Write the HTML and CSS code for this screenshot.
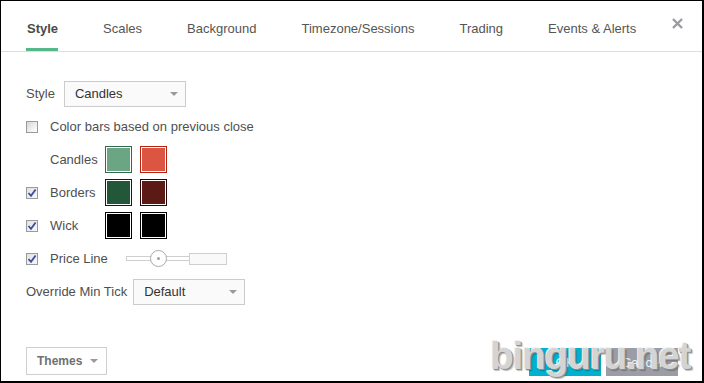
FILE: index.html
```html
<!DOCTYPE html>
<html>
<head>
<meta charset="utf-8">
<link rel="stylesheet" href="styles.css">
</head>
<body>
<div class="dialog">
  <div class="tabs">
    <div class="tab-list">
      <div class="tab active">Style</div>
      <div class="tab">Scales</div>
      <div class="tab">Background</div>
      <div class="tab">Timezone/Sessions</div>
      <div class="tab">Trading</div>
      <div class="tab">Events &amp; Alerts</div>
    </div>
    <div class="close">
      <svg width="11" height="11" viewBox="0 0 11 11"><path d="M1 1 L10 10 M10 1 L1 10" stroke="#9b9ba2" stroke-width="2.4" fill="none"/></svg>
    </div>
  </div>

  <div class="content">
    <div class="row">
      <span class="label">Style</span>
      <div class="select select-style"><span>Candles</span><i class="caret"></i></div>
    </div>
    <div class="row">
      <span class="cb"></span>
      <span class="label">Color bars based on previous close</span>
    </div>
    <div class="row">
      <span class="cb-space"></span>
      <span class="name">Candles</span>
      <span class="swatch sw-up"><span></span></span>
      <span class="swatch sw-down"><span></span></span>
    </div>
    <div class="row">
      <span class="cb checked"><svg width="10" height="10" viewBox="0 0 10 10"><path d="M1.5 5 L4 7.8 L8.6 1.5" stroke="#3a4c9c" stroke-width="1.8" fill="none"/></svg></span>
      <span class="name">Borders</span>
      <span class="swatch sw-bup"><span></span></span>
      <span class="swatch sw-bdown"><span></span></span>
    </div>
    <div class="row">
      <span class="cb checked"><svg width="10" height="10" viewBox="0 0 10 10"><path d="M1.5 5 L4 7.8 L8.6 1.5" stroke="#3a4c9c" stroke-width="1.8" fill="none"/></svg></span>
      <span class="name">Wick</span>
      <span class="swatch sw-wick"><span></span></span>
      <span class="swatch sw-wick"><span></span></span>
    </div>
    <div class="row">
      <span class="cb checked"><svg width="10" height="10" viewBox="0 0 10 10"><path d="M1.5 5 L4 7.8 L8.6 1.5" stroke="#3a4c9c" stroke-width="1.8" fill="none"/></svg></span>
      <span class="label">Price Line</span>
      <div class="slider">
        <span class="track-thin"></span>
        <span class="track-box"></span>
        <span class="knob"><i></i></span>
      </div>
    </div>
    <div class="row">
      <span class="label">Override Min Tick</span>
      <div class="select select-tick"><span>Default</span><i class="caret"></i></div>
    </div>
  </div>

  <div class="footer">
    <div class="themes"><span>Themes</span><i class="caret"></i></div>
    <div class="btn ok">OK</div>
    <div class="btn cancel">Cancel</div>
  </div>

  <div class="watermark">binguru.net</div>
</div>
</body>
</html>
```

FILE: styles.css
```css
html, body {
  margin: 0;
  padding: 0;
  background: #ffffff;
}

.dialog {
  position: relative;
  width: 704px;
  height: 383px;
  box-sizing: border-box;
  border-top: 1px solid #000;
  border-left: 1px solid #000;
  border-right: 2px solid #000;
  border-bottom: 2px solid #000;
  background: #fff;
  display: flex;
  flex-direction: column;
  font-family: "Liberation Sans", Arial, sans-serif;
  font-size: 13px;
  color: #4f4f4f;
  overflow: hidden;
}

/* Tabs */
.tabs {
  display: flex;
  align-items: flex-start;
  height: 50px;
  border-bottom: 1px solid #dedede;
  padding-left: 25px;
}

.tab-list {
  display: flex;
  gap: 45px;
}

.tab {
  padding-top: 19px;
  line-height: 18px;
  height: 28px;
  border-bottom: 3px solid transparent;
  color: #555;
  white-space: nowrap;
}

.tab.active {
  font-weight: bold;
  color: #4a4a4a;
  border-bottom-color: #55b88a;
  padding-left: 1px;
}

.close {
  margin-left: auto;
  margin-right: 19px;
  margin-top: 17px;
  width: 11px;
  height: 11px;
  display: flex;
}

/* Content */
.content {
  padding: 25px 0 0 25px;
  display: flex;
  flex-direction: column;
}

.row {
  display: flex;
  align-items: center;
  height: 33px;
}

.label {
  white-space: nowrap;
}

.name {
  width: 55px;
  white-space: nowrap;
}

.cb, .cb-space {
  width: 12px;
  height: 12px;
  margin-right: 12px;
  flex: none;
}

.cb {
  box-sizing: border-box;
  border: 1px solid #9a9a9a;
  background: linear-gradient(135deg, #d6d6d6 0%, #f4f4f4 70%, #ffffff 100%);
  display: flex;
  align-items: center;
  justify-content: center;
}

.cb.checked {
  background: linear-gradient(135deg, #e2e2e2 0%, #f7f7f7 100%);
}

.cb svg {
  display: block;
}

/* Select */
.select {
  box-sizing: border-box;
  height: 26px;
  border: 1px solid #cccccc;
  background: #fafafa;
  display: flex;
  align-items: center;
  justify-content: space-between;
  padding: 0 7px 0 10px;
  margin-left: 9px;
  color: #333;
}

.select-style {
  width: 122px;
}

.select-tick {
  width: 112px;
  margin-left: 6px;
}

.caret {
  display: block;
  width: 0;
  height: 0;
  border-left: 4px solid transparent;
  border-right: 4px solid transparent;
  border-top: 4px solid #9a9a9a;
}

/* Swatches */
.swatch {
  box-sizing: border-box;
  width: 27px;
  height: 27px;
  padding: 1px;
  background: #fff;
  border: 1px solid #000;
  margin-right: 8px;
  display: flex;
}

.swatch span {
  flex: 1;
}

.sw-up { border-color: #2f6c4d; }
.sw-up span { background: #6ba584; }
.sw-down { border-color: #b42412; }
.sw-down span { background: #dc5442; }
.sw-bup { border-color: #0d2217; }
.sw-bup span { background: #225739; }
.sw-bdown { border-color: #2a0706; }
.sw-bdown span { background: #5b1a15; }
.sw-wick { border-color: #000; }
.sw-wick span { background: #000; }

/* Slider */
.slider {
  position: relative;
  margin-left: 18px;
  width: 101px;
  height: 17px;
  display: flex;
  align-items: center;
}

.track-thin {
  box-sizing: border-box;
  width: 63px;
  height: 5px;
  border: 1px solid #cfcfcf;
  border-right: none;
  background: #fff;
}

.track-box {
  box-sizing: border-box;
  width: 38px;
  height: 12px;
  border: 1px solid #cfcfcf;
  background: #f9f9f9;
}

.knob {
  position: absolute;
  left: 24px;
  top: 0;
  box-sizing: border-box;
  width: 17px;
  height: 17px;
  border: 1px solid #a9a9b0;
  border-radius: 50%;
  background: #fff;
  display: flex;
  align-items: center;
  justify-content: center;
}

.knob i {
  display: block;
  width: 3px;
  height: 3px;
  border-radius: 50%;
  background: #a0a0a0;
}

/* Footer */
.footer {
  margin-top: auto;
  display: flex;
  align-items: flex-end;
  padding: 0 24px 5px 25px;
}

.themes {
  box-sizing: border-box;
  width: 81px;
  height: 28px;
  margin-bottom: 1px;
  border: 1px solid #cfcfcf;
  display: flex;
  align-items: center;
  gap: 8px;
  padding-left: 10px;
  font-size: 12px;
  font-weight: bold;
  color: #707070;
}

.btn {
  box-sizing: border-box;
  width: 72px;
  height: 28px;
  display: flex;
  align-items: center;
  justify-content: center;
  color: #e8f6fa;
  font-size: 13px;
}

.ok {
  margin-left: auto;
  background: #00b1cf;
}

.cancel {
  margin-left: 5px;
  background: #9c9da4;
}

/* Watermark overlay */
.watermark {
  position: absolute;
  left: 489px;
  top: 333px;
  font-family: "Liberation Sans", Arial, sans-serif;
  font-weight: bold;
  font-size: 39px;
  letter-spacing: -1.3px;
  color: #d4d4d4;
  text-shadow: 1px 1px 0 #8e8e8e, 2px 2px 1px rgba(0,0,0,0.25), -1px -1px 0 #f2f2f2;
  white-space: nowrap;
  pointer-events: none;
}
```
